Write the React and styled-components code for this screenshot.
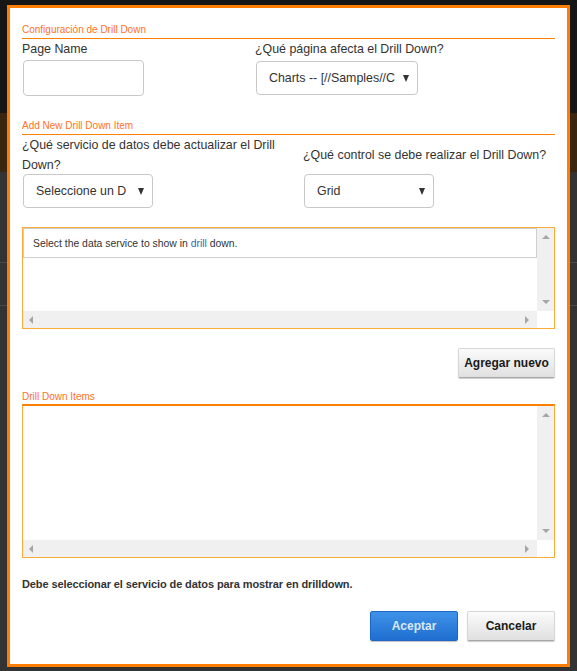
import React from "react";
import styled, { createGlobalStyle } from "styled-components";

const Global = createGlobalStyle`
  html, body { margin: 0; padding: 0; }
  body {
    width: 577px;
    height: 671px;
    overflow: hidden;
    background:
      linear-gradient(to bottom,
        #161616 0px, #161616 113px,
        #3a2511 113px, #3a2511 172px,
        #333333 172px, #333333 262px,
        #4a4a4a 262px, #4a4a4a 263px,
        #333333 263px, #333333 305px,
        #4a4a4a 305px, #4a4a4a 306px,
        #333333 306px);
    font-family: "Liberation Sans", Arial, sans-serif;
  }
`;

const Dialog = styled.div`
  box-sizing: border-box;
  margin: 5px 0 0 7px;
  width: 563px;
  height: 662px;
  background: #fff;
  border: 3px solid #ff7d00;
  padding: 14px 12px 0 12px;
  display: flex;
  flex-direction: column;
`;

const SectionTitle = styled.div`
  flex-shrink: 0;
  font-family: "Liberation Sans", Arial, sans-serif;
  font-size: 10px;
  line-height: 15px;
  height: 15px;
  color: #ff7126;
  padding-bottom: ${(p) => (p.$boxed ? "0" : "1px")};
  margin-top: ${(p) => p.$mt || 0}px;
`;

const SectionRule = styled.div`
  flex-shrink: 0;
  height: 1px;
  background: #ff7f00;
`;

const FormRow = styled.div`
  display: grid;
  grid-template-columns: ${(p) => p.$cols};
`;

const Field = styled.div`
  display: flex;
  flex-direction: column;
`;

const Label = styled.div`
  font-size: 12.4px;
  line-height: 20px;
  color: #333;
  height: ${(p) => p.$h || 20}px;
  display: flex;
  align-items: center;
`;

const TextInput = styled.div`
  box-sizing: border-box;
  margin: 1px 0 0 1px;
  width: 121px;
  height: 36px;
  border: 1px solid #c8c8c8;
  border-radius: 4px;
  background: #fff;
`;

const Select = styled.div`
  box-sizing: border-box;
  margin: ${(p) => p.$mt || 0}px 0 0 1px;
  width: ${(p) => p.$w}px;
  height: 34px;
  border: 1px solid #c8c8c8;
  border-radius: 4px;
  background: #fff;
  display: flex;
  align-items: center;
  padding: 0 8px 0 12px;
  font-size: 12.4px;
  color: #333;
`;

const SelectText = styled.span`
  flex: 1;
  white-space: nowrap;
  overflow: hidden;
`;

const Caret = styled.span`
  width: 0;
  height: 0;
  border-left: 3.5px solid transparent;
  border-right: 3.5px solid transparent;
  border-top: 7px solid #333;
`;

const GridBox = styled.div`
  box-sizing: border-box;
  margin-top: ${(p) => p.$mt || 0}px;
  height: ${(p) => p.$h}px;
  flex-shrink: 0;
  border: 1px solid #fbaa3c;
  border-top: ${(p) => (p.$strong ? "2px solid #ff7f00" : "1px solid #fbaa3c")};
  display: grid;
  grid-template-columns: 1fr 17px;
  grid-template-rows: 1fr 17px;
  background: #fff;
`;

const GridBody = styled.div`
  background: #fff;
`;

const GridHeader = styled.div`
  box-sizing: border-box;
  height: 30px;
  border: 1px solid #cfcfcf;
  display: flex;
  align-items: center;
  padding-left: 9px;
  font-family: "Liberation Sans", Tahoma, sans-serif;
  font-size: 10.4px;
  color: #333;
`;

const Link = styled.span`
  color: #2d6ab4;
`;

const VScroll = styled.div`
  background: #f0f0f0;
  display: flex;
  flex-direction: column;
  justify-content: space-between;
  align-items: center;
  padding: 7px 0 7px;
`;

const HScroll = styled.div`
  background: #f0f0f0;
  display: flex;
  justify-content: space-between;
  align-items: center;
  padding: 0 8px 0 6px;
`;

const Corner = styled.div`
  background: #fff;
`;

const Arrow = styled.span`
  width: 0;
  height: 0;
  ${(p) =>
    p.$dir === "up"
      ? "border-left:4px solid transparent;border-right:4px solid transparent;border-bottom:4px solid #a6a6a6;"
      : p.$dir === "down"
      ? "border-left:4px solid transparent;border-right:4px solid transparent;border-top:4px solid #a6a6a6;"
      : p.$dir === "left"
      ? "border-top:4px solid transparent;border-bottom:4px solid transparent;border-right:4px solid #a6a6a6;"
      : "border-top:4px solid transparent;border-bottom:4px solid transparent;border-left:4px solid #a6a6a6;"}
`;

const ButtonRow = styled.div`
  display: flex;
  justify-content: flex-end;
  gap: 9px;
  margin-top: ${(p) => p.$mt || 0}px;
`;

const Button = styled.button`
  box-sizing: border-box;
  height: 30px;
  width: ${(p) => p.$w}px;
  padding: 0;
  font-family: "Liberation Sans", Arial, sans-serif;
  font-weight: bold;
  font-size: 12px;
  border-radius: 2px;
  cursor: pointer;
  ${(p) =>
    p.$primary
      ? `
    color: #dbe7f7;
    background: linear-gradient(to bottom, #3f92e8, #1f6ed0);
    border: 1px solid #1e66c4;
    box-shadow: 0 1px 1px rgba(0,0,0,0.25);
  `
      : `
    color: #1a1a1a;
    background: linear-gradient(to bottom, #fbfbfb, #e0e0e0);
    border: 1px solid #d6d6d6;
    border-bottom: 1px solid #a8a8a8;
    box-shadow: 0 1px 1px rgba(0,0,0,0.2);
  `}
`;

const Message = styled.div`
  margin-top: 19px;
  font-size: 11px;
  letter-spacing: -0.1px;
  line-height: 14px;
  font-weight: bold;
  color: #333;
`;

const Grid = ({ h, mt, strong, header }) => (
  <GridBox $h={h} $mt={mt} $strong={strong}>
    <GridBody>
      {header && (
        <GridHeader>
          <span>
            Select the data service to show in <Link>drill</Link> down.
          </span>
        </GridHeader>
      )}
    </GridBody>
    <VScroll>
      <Arrow $dir="up" />
      <Arrow $dir="down" />
    </VScroll>
    <HScroll>
      <Arrow $dir="left" />
      <Arrow $dir="right" />
    </HScroll>
    <Corner />
  </GridBox>
);

export default function App() {
  return (
    <>
      <Global />
      <Dialog>
        <SectionTitle>Configuración de Drill Down</SectionTitle>
        <SectionRule />
        <FormRow $cols="233px 1fr">
          <Field>
            <Label>Page Name</Label>
            <TextInput />
          </Field>
          <Field>
            <Label>¿Qué página afecta el Drill Down?</Label>
            <Select $w={162} $mt={2}>
              <SelectText>Charts -- [//Samples//C</SelectText>
              <Caret />
            </Select>
          </Field>
        </FormRow>

        <SectionTitle $mt={22}>Add New Drill Down Item</SectionTitle>
        <SectionRule />
        <FormRow $cols="281px 1fr">
          <Field>
            <Label $h={39}>
              ¿Qué servicio de datos debe actualizar el Drill
              <br />
              Down?
            </Label>
            <Select $w={130}>
              <SelectText>Seleccione un D</SelectText>
              <Caret />
            </Select>
          </Field>
          <Field>
            <Label $h={39}>¿Qué control se debe realizar el Drill Down?</Label>
            <Select $w={130}>
              <SelectText>Grid</SelectText>
              <Caret />
            </Select>
          </Field>
        </FormRow>

        <Grid h={102} mt={19} header />

        <ButtonRow $mt={19}>
          <Button $w={97}>Agregar nuevo</Button>
        </ButtonRow>

        <SectionTitle $mt={11} $boxed>
          Drill Down Items
        </SectionTitle>
        <Grid h={154} strong />

        <Message>Debe seleccionar el servicio de datos para mostrar en drilldown.</Message>

        <ButtonRow $mt={20}>
          <Button $w={88} $primary>
            Aceptar
          </Button>
          <Button $w={88}>Cancelar</Button>
        </ButtonRow>
      </Dialog>
    </>
  );
}
